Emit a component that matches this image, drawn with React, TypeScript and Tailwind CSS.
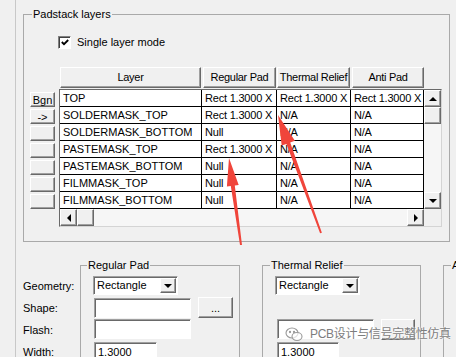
import React from "react";

const raised =
  "bg-[#f0f0f0] border border-t-white border-l-white border-r-[#696969] border-b-[#696969] shadow-[inset_-1px_-1px_0_#a0a0a0]";
const sunken =
  "bg-white border border-t-[#a0a0a0] border-l-[#a0a0a0] border-r-white border-b-white shadow-[inset_1px_1px_0_#696969]";

const rows = [
  ["TOP", "Rect 1.3000 X", "Rect 1.3000 X", "Rect 1.3000 X"],
  ["SOLDERMASK_TOP", "Rect 1.3000 X", "N/A", "N/A"],
  ["SOLDERMASK_BOTTOM", "Null", "N/A", "N/A"],
  ["PASTEMASK_TOP", "Rect 1.3000 X", "N/A", "N/A"],
  ["PASTEMASK_BOTTOM", "Null", "N/A", "N/A"],
  ["FILMMASK_TOP", "Null", "N/A", "N/A"],
  ["FILMMASK_BOTTOM", "Null", "N/A", "N/A"],
];

const Combo = ({ value }: { value: string }) => (
  <div className={`${sunken} w-[85px] h-[19px] flex items-center`}>
    <span className="flex-1 pl-[3px] leading-[13px]">{value}</span>
    <div className={`${raised} w-[16px] h-[15px] mr-px flex items-center justify-center`}>
      <div className="w-0 h-0 border-x-[4px] border-x-transparent border-t-[4px] border-t-black" />
    </div>
  </div>
);

const Arrows = () => (
  <svg className="absolute inset-0 pointer-events-none" width="456" height="357" viewBox="0 0 456 357">
    <g fill="#f0453b">
      <polygon points="229,158 238.7,184.9 234.8,185.4 242,245 240,245.1 230.8,186 226.9,186.5" />
      <polygon points="278,115 294.9,140.8 290.2,142.5 321.9,232.7 320.1,233.3 286.4,143.9 281.7,145.6" />
    </g>
  </svg>
);

const Watermark = () => (
  <div className="absolute left-[285px] top-[327px] flex items-center gap-[7px] text-[#7d7d7d] [text-shadow:0_0_2px_#fff,0_0_2px_#fff] pointer-events-none">
    <svg width="18" height="15" viewBox="0 0 18 15" fill="none" stroke="#9a9a9a" strokeWidth="1.1">
      <ellipse cx="7" cy="6" rx="6" ry="5" fill="rgba(255,255,255,0.7)" />
      <ellipse cx="12" cy="9.5" rx="5" ry="4" fill="rgba(255,255,255,0.7)" />
      <circle cx="5" cy="5" r="0.6" fill="#9a9a9a" />
      <circle cx="9" cy="5" r="0.6" fill="#9a9a9a" />
    </svg>
    <span className="text-[12px] leading-[15px] tracking-[-0.3px] font-[Liberation_Sans,Noto_Sans_CJK_SC,sans-serif]">
      PCB设计与信号完整性仿真
    </span>
  </div>
);

export default function App() {
  return (
    <div className="w-[456px] h-[357px] overflow-hidden relative bg-[#f0f0f0] flex font-[Liberation_Sans,Arial,sans-serif] text-[11px] text-black">
      <div className="w-[15px] shrink-0" />
      <div className="flex-1 border-l border-[#c8c8c8] pl-[7px]">
        {/* Padstack layers */}
        <fieldset className="mt-[7px] w-[427px] h-[235px] border border-[#a9a9a9] shrink-0">
          <legend className="ml-[8px] px-px leading-[14px]">Padstack layers</legend>
          <div className="mt-[15px] ml-[34px] flex items-center gap-[6px]">
            <div className="w-[13px] h-[13px] bg-white border border-t-[#808080] border-l-[#808080] border-r-white border-b-white shadow-[inset_1px_1px_0_#404040] flex items-center justify-center">
              <svg width="8" height="7" viewBox="0 0 8 7">
                <polyline points="0.8,3 3,5.2 7.2,1" fill="none" stroke="#000" strokeWidth="1.8" />
              </svg>
            </div>
            <span className="leading-[13px]">Single layer mode</span>
          </div>

          <div className="mt-[18px] ml-[6px] flex">
            <div className="w-[25px] pt-[25px] flex flex-col gap-[2px]">
              {rows.map((_, i) => (
                <div key={i} className={`${raised} h-[15px] flex items-center justify-center leading-[12px]`}>
                  {i === 0 ? "Bgn" : i === 1 ? "->" : ""}
                </div>
              ))}
            </div>
            <div className="ml-[4px]">
              <div className="h-[21px] pl-px flex tracking-[-0.3px] whitespace-nowrap">
                <div className={`${raised} w-[141px] mr-[2px] flex items-center justify-center`}>Layer</div>
                <div className={`${raised} w-[73px] mr-px flex items-center justify-center`}>Regular Pad</div>
                <div className={`${raised} w-[73px] mr-[2px] flex items-center justify-center overflow-hidden`}>Thermal Relief</div>
                <div className={`${raised} w-[72px] flex items-center justify-center`}>Anti Pad</div>
              </div>
              <div className="mt-px w-[383px] border border-t-[#696969] border-l-[#696969] border-r-[#d4d4d4] border-b-[#d4d4d4] flex bg-white">
                <div className="w-[364px]">
                  {rows.map((r, i) => (
                    <div key={i} className="h-[17px] flex border-b border-black leading-[16px] whitespace-nowrap">
                      <div className="w-[142px] border-r border-black pl-[3px] overflow-hidden">{r[0]}</div>
                      <div className="w-[75px] border-r border-black pl-[3px] overflow-hidden tracking-[-0.2px]">{r[1]}</div>
                      <div className="w-[74px] border-r border-black pl-[3px] overflow-hidden tracking-[-0.2px]">{r[2]}</div>
                      <div className="w-[73px] border-r border-black pl-[3px] overflow-hidden tracking-[-0.2px]">{r[3]}</div>
                    </div>
                  ))}
                  <div className="h-[17px] flex bg-[#f6f6f6]">
                    <div className={`${raised} w-[17px] flex items-center justify-center`}>
                      <div className="w-0 h-0 border-y-[4px] border-y-transparent border-r-[4px] border-r-black" />
                    </div>
                    <div className={`${raised} w-[17px]`} />
                    <div className="flex-1" />
                    <div className={`${raised} w-[17px] flex items-center justify-center`}>
                      <div className="w-0 h-0 border-y-[4px] border-y-transparent border-l-[4px] border-l-black" />
                    </div>
                  </div>
                </div>
                <div className="w-[17px] flex flex-col bg-[#f6f6f6]">
                  <div className={`${raised} h-[17px] flex items-center justify-center`}>
                    <div className="w-0 h-0 border-x-[4px] border-x-transparent border-b-[4px] border-b-black" />
                  </div>
                  <div className={`${raised} h-[17px]`} />
                  <div className="flex-1" />
                  <div className={`${raised} h-[17px] flex items-center justify-center`}>
                    <div className="w-0 h-0 border-x-[4px] border-x-transparent border-t-[4px] border-t-black" />
                  </div>
                  <div className="h-[17px] bg-[#f0f0f0]" />
                </div>
              </div>
            </div>
          </div>
        </fieldset>

        {/* Pad details */}
        <div className="mt-[16px] flex items-start">
          <div className="w-[57px] shrink-0 pt-[18px] flex flex-col gap-[2px]">
            {["Geometry:", "Shape:", "Flash:", "Width:"].map((l) => (
              <div key={l} className="h-[20px] flex items-center">{l}</div>
            ))}
          </div>

          <fieldset className="w-[160px] h-[120px] shrink-0 border border-[#a9a9a9]">
            <legend className="ml-[6px] px-px leading-[14px]">Regular Pad</legend>
            <div className="mt-[4px] ml-[12px]">
              <Combo value="Rectangle" />
            </div>
            <div className="mt-[2px] ml-[13px] h-[21px] flex items-center">
              <div className={`${sunken} w-[97px] h-[20px]`} />
              <div className={`${raised} ml-[7px] w-[35px] h-[21px] flex items-center justify-center leading-[12px]`}>...</div>
            </div>
            <div className="mt-px ml-[13px]">
              <div className={`${sunken} w-[97px] h-[20px]`} />
            </div>
            <div className="mt-[3px] ml-[13px]">
              <div className={`${sunken} w-[63px] h-[20px] pl-[3px] leading-[18px]`}>1.3000</div>
            </div>
          </fieldset>

          <fieldset className="ml-[22px] w-[159px] h-[120px] shrink-0 border border-[#a9a9a9]">
            <legend className="ml-[7px] px-px leading-[14px]">Thermal Relief</legend>
            <div className="mt-[4px] ml-[12px]">
              <Combo value="Rectangle" />
            </div>
            <div className="mt-[2px] h-[21px]" />
            <div className="mt-px ml-[14px] h-[21px] flex items-start">
              <div className={`${sunken} w-[97px] h-[20px]`} />
              <div className={`${raised} ml-[7px] w-[34px] h-[21px]`} />
            </div>
            <div className="mt-[2px] ml-[14px]">
              <div className={`${sunken} w-[62px] h-[20px] pl-[3px] leading-[18px]`}>1.3000</div>
            </div>
          </fieldset>

          <fieldset className="ml-[22px] w-[40px] h-[120px] shrink-0 border border-[#a9a9a9]">
            <legend className="ml-[7px] px-px leading-[14px]">A</legend>
          </fieldset>
        </div>
      </div>

      <Watermark />
      <Arrows />
    </div>
  );
}
